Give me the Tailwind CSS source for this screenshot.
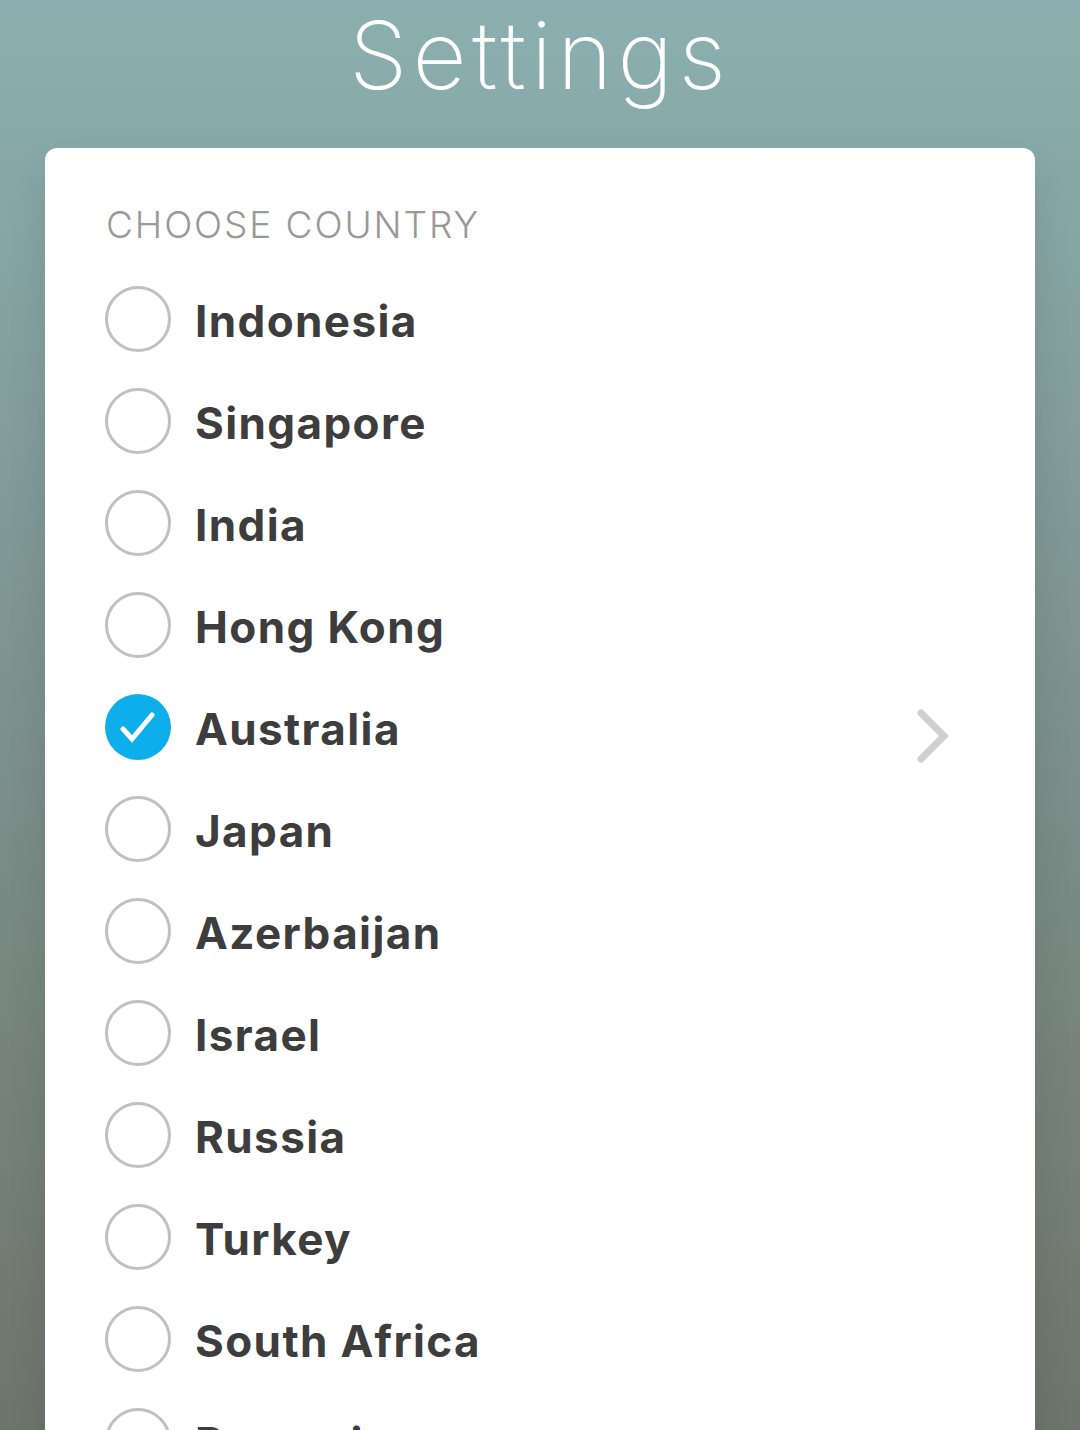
<!DOCTYPE html>
<html>
<head>
    <meta charset="utf-8">
    <title>Settings</title>
    <script src="https://cdn.jsdelivr.net/npm/@tailwindcss/browser@4"></script>
</head>
<body class="font-['Inter',sans-serif]">
    <div class="h-[1430px] w-[1080px] overflow-hidden bg-gradient-to-b from-[#8bafb0] to-[#6e756b]">
        <h1 class="h-[148px] pt-[5px] text-center text-[94px] leading-[100px] font-extralight tracking-[5.2px] text-white">Settings</h1>
        <div class="mx-[45px] h-[1400px] rounded-t-xl bg-white pl-[60px] pr-[85px] pt-[55px] shadow-[0_20px_40px_rgba(0,0,0,0.1)]">
            <div class="mb-[21px] pl-[1px] text-[37px] leading-[44px] font-light tracking-[1.9px] text-[#999999]">CHOOSE COUNTRY</div>

            <div class="flex h-[102px] items-center gap-[24px] text-[44px] font-bold text-[#3d3d3d]">
                <span class="h-[66px] w-[66px] shrink-0 rounded-full border-[3px] border-[#c0c0c0]"></span>
                <span class="mt-[4px] tracking-[1.4px]">Indonesia</span>
            </div>
            <div class="flex h-[102px] items-center gap-[24px] text-[44px] font-bold text-[#3d3d3d]">
                <span class="h-[66px] w-[66px] shrink-0 rounded-full border-[3px] border-[#c0c0c0]"></span>
                <span class="mt-[4px] tracking-[1.4px]">Singapore</span>
            </div>
            <div class="flex h-[102px] items-center gap-[24px] text-[44px] font-bold text-[#3d3d3d]">
                <span class="h-[66px] w-[66px] shrink-0 rounded-full border-[3px] border-[#c0c0c0]"></span>
                <span class="mt-[4px] tracking-[1.4px]">India</span>
            </div>
            <div class="flex h-[102px] items-center gap-[24px] text-[44px] font-bold text-[#3d3d3d]">
                <span class="h-[66px] w-[66px] shrink-0 rounded-full border-[3px] border-[#c0c0c0]"></span>
                <span class="mt-[4px] tracking-[1.4px]">Hong Kong</span>
            </div>
            <div class="flex h-[102px] items-center gap-[24px] text-[44px] font-bold text-[#3d3d3d]">
                <span class="flex h-[66px] w-[66px] shrink-0 items-center justify-center rounded-full bg-[#0eaeea]">
                    <svg width="36" height="32" viewBox="0 0 36 32" fill="none" stroke="#ffffff" stroke-width="5" stroke-linecap="round" stroke-linejoin="miter"><path d="M3 18 L12 28 L32 4"/></svg>
                </span>
                <span class="mt-[4px] tracking-[1.4px]">Australia</span>
                <svg class="ml-auto mt-[18px]" width="34" height="54" viewBox="0 0 34 54" fill="none" stroke="#cfcfcf" stroke-width="7" stroke-linecap="round" stroke-linejoin="miter"><path d="M5 4 L28 27 L5 50"/></svg>
            </div>
            <div class="flex h-[102px] items-center gap-[24px] text-[44px] font-bold text-[#3d3d3d]">
                <span class="h-[66px] w-[66px] shrink-0 rounded-full border-[3px] border-[#c0c0c0]"></span>
                <span class="mt-[4px] tracking-[1.4px]">Japan</span>
            </div>
            <div class="flex h-[102px] items-center gap-[24px] text-[44px] font-bold text-[#3d3d3d]">
                <span class="h-[66px] w-[66px] shrink-0 rounded-full border-[3px] border-[#c0c0c0]"></span>
                <span class="mt-[4px] tracking-[1.4px]">Azerbaijan</span>
            </div>
            <div class="flex h-[102px] items-center gap-[24px] text-[44px] font-bold text-[#3d3d3d]">
                <span class="h-[66px] w-[66px] shrink-0 rounded-full border-[3px] border-[#c0c0c0]"></span>
                <span class="mt-[4px] tracking-[1.4px]">Israel</span>
            </div>
            <div class="flex h-[102px] items-center gap-[24px] text-[44px] font-bold text-[#3d3d3d]">
                <span class="h-[66px] w-[66px] shrink-0 rounded-full border-[3px] border-[#c0c0c0]"></span>
                <span class="mt-[4px] tracking-[1.4px]">Russia</span>
            </div>
            <div class="flex h-[102px] items-center gap-[24px] text-[44px] font-bold text-[#3d3d3d]">
                <span class="h-[66px] w-[66px] shrink-0 rounded-full border-[3px] border-[#c0c0c0]"></span>
                <span class="mt-[4px] tracking-[1.4px]">Turkey</span>
            </div>
            <div class="flex h-[102px] items-center gap-[24px] text-[44px] font-bold text-[#3d3d3d]">
                <span class="h-[66px] w-[66px] shrink-0 rounded-full border-[3px] border-[#c0c0c0]"></span>
                <span class="mt-[4px] tracking-[1.4px]">South Africa</span>
            </div>
            <div class="flex h-[102px] items-center gap-[24px] text-[44px] font-bold text-[#3d3d3d]">
                <span class="h-[66px] w-[66px] shrink-0 rounded-full border-[3px] border-[#c0c0c0]"></span>
                <span class="mt-[4px] tracking-[1.4px]">Romania</span>
            </div>
        </div>
    </div>
</body>
</html>
